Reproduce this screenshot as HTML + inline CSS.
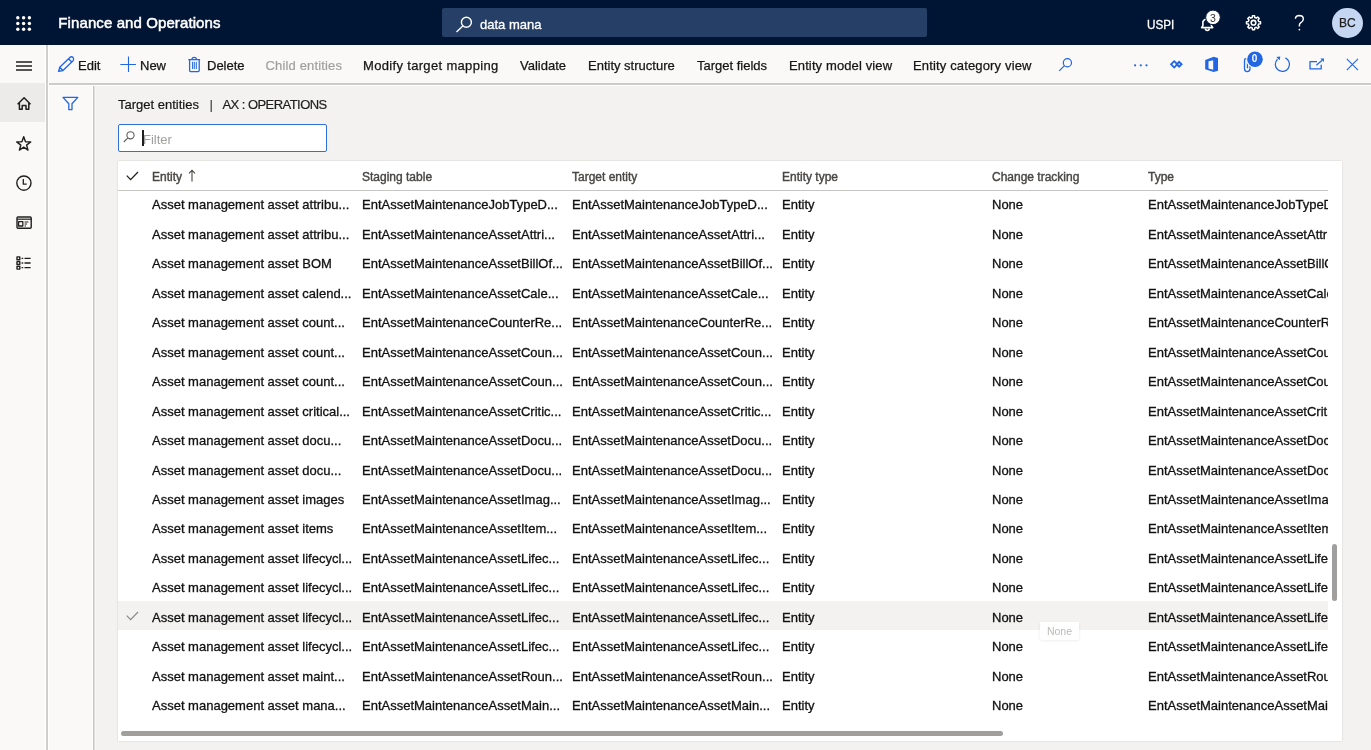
<!DOCTYPE html>
<html><head><meta charset="utf-8">
<style>
*{box-sizing:border-box;margin:0;padding:0}
html,body{width:1371px;height:750px;overflow:hidden;background:#f3f2f1;font-family:"Liberation Sans",sans-serif;color:#201f1e}
svg{position:absolute;overflow:visible}
.abs{position:absolute}
#root{position:absolute;left:0;top:0;width:1371px;height:750px;will-change:transform}
#hdr{position:absolute;left:0;top:0;width:1371px;height:45px;background:#001433}
#title{position:absolute;left:58.3px;top:14px;font-size:15px;letter-spacing:0.1px;color:#fff;-webkit-text-stroke:0.5px #fff;white-space:nowrap}
#search{position:absolute;left:442px;top:8px;width:485px;height:29px;background:#263f66;border-radius:2px}
#search .t{position:absolute;left:38px;top:8.5px;font-size:13px;color:#fff;-webkit-text-stroke:0.3px #fff;white-space:nowrap}
#uspi{position:absolute;left:1146.5px;top:16.5px;font-size:13px;transform:scaleX(0.9);transform-origin:0 0;color:#fff;-webkit-text-stroke:0.3px #fff}
#avatar{position:absolute;left:1332px;top:7.5px;width:30.5px;height:30.5px;border-radius:50%;background:#c4d6f1;color:#201f1e;-webkit-text-stroke:0.25px #201f1e;font-size:12px;text-align:center;line-height:30.5px}
#ap{position:absolute;left:49px;top:45px;width:1322px;height:41px;background:#faf9f8;border-bottom:1px solid #fff}
#apb{position:absolute;left:49px;top:83px;width:1324px;height:2px;background:#cdcbc9}
.ab{position:absolute;top:13.4px;font-size:13px;color:#161514;-webkit-text-stroke:0.25px #161514;white-space:nowrap}
.ab.dis{color:#a19f9d;-webkit-text-stroke:0.2px #a19f9d}
#nav{position:absolute;left:0;top:45px;width:49px;height:705px;background:#faf9f8;border-right:1px solid #fff}
.vl{position:absolute;width:1px}
#homehl{position:absolute;left:0;top:83px;width:45px;height:39px;background:#edebe9}
#fp{position:absolute;left:49px;top:86px;width:47px;height:664px;background:#faf9f8}
#crumb{position:absolute;left:118px;top:97px;font-size:13px;color:#161514;-webkit-text-stroke:0.2px #161514;white-space:nowrap}
#filter{position:absolute;left:118px;top:124px;width:209px;height:28px;background:#fff;border:1.5px solid #2f6fe0;border-radius:2px}
#filter .t{position:absolute;left:24px;top:6.5px;font-size:13px;color:#a19f9d}
#filter .caret{position:absolute;left:23px;top:5px;width:1.5px;height:16px;background:#201f1e}
#card{position:absolute;left:118px;top:161px;width:1224px;height:580px;background:#fff;box-shadow:0 0 1.5px rgba(0,0,0,.18)}
.hc{position:absolute;top:9.2px;font-size:12px;color:#484644;-webkit-text-stroke:0.4px #484644;white-space:nowrap}
#hline{position:absolute;left:0;top:29px;width:1210px;height:1px;background:#c8c6c4}
.row{position:absolute;left:0;width:1210px;height:29.46px}
.row.sel{background:#f3f2f1;height:28.2px}
.c{position:absolute;top:8.4px;font-size:13px;color:#111;-webkit-text-stroke:0.3px #111;white-space:nowrap;overflow:hidden}
.ty{width:180px}
.chk{left:8px;top:10px}
#vsb{position:absolute;left:1214px;top:383px;width:5px;height:57px;border-radius:3px;background:#a19f9d}
#hsb{position:absolute;left:3px;top:570px;width:882px;height:5px;border-radius:3px;background:#a19f9d}
#tip{position:absolute;left:1040px;top:622px;width:39px;height:18px;background:#fff;box-shadow:0 0.5px 3px rgba(0,0,0,.09);font-size:10.5px;color:#bdbab7;text-align:center;line-height:18px}
</style></head><body><div id="root">
<div id="hdr">
  <svg style="left:0;top:0" width="1" height="1" fill="#fff"><circle cx="17.8" cy="17.8" r="1.7"/><circle cx="23.6" cy="17.8" r="1.7"/><circle cx="29.4" cy="17.8" r="1.7"/><circle cx="17.8" cy="23.5" r="1.7"/><circle cx="23.6" cy="23.5" r="1.7"/><circle cx="29.4" cy="23.5" r="1.7"/><circle cx="17.8" cy="29.2" r="1.7"/><circle cx="23.6" cy="29.2" r="1.7"/><circle cx="29.4" cy="29.2" r="1.7"/></svg>
  <div id="title">Finance and Operations</div>
  <div id="search">
    <svg style="left:0;top:0" width="40" height="29" viewBox="442 8 40 29" fill="none" stroke="#fff" stroke-width="1.4"><circle cx="466.4" cy="22.3" r="5"/><path d="M462.8 26 L456.5 32"/></svg>
    <div class="t">data mana</div>
  </div>
  <div id="uspi">USPI</div>
  <!-- bell -->
  <svg style="left:0;top:0" width="1" height="1" viewBox="0 0 1 1">
    <g fill="none" stroke="#fff" stroke-width="1.6" stroke-linejoin="round">
      <path d="M1201.6 27.6 H1212.8 L1211.4 25.6 V21.6 A4.8 4.8 0 0 0 1202.9 21.6 V25.6 Z"/>
      <path d="M1205.4 28.6 A1.9 1.9 0 0 0 1209.2 28.6"/>
    </g>
    <circle cx="1213" cy="17.4" r="7.3" fill="#fff" stroke="#001433" stroke-width="1"/>
  </svg>
  <div class="abs" style="left:1209.9px;top:11.6px;font-size:10.5px;color:#323130">3</div>
  <!-- gear -->
  <svg style="left:0;top:0" width="1" height="1" viewBox="0 0 1 1">
    <g fill="none" stroke="#fff" stroke-width="1.5" stroke-linejoin="round">
      <path d="M1258.64 21.42 L1260.52 21.64 L1260.52 23.76 L1258.64 23.98 L1258.04 25.43 L1259.21 26.92 L1257.72 28.41 L1256.23 27.24 L1254.78 27.84 L1254.56 29.72 L1252.44 29.72 L1252.22 27.84 L1250.77 27.24 L1249.28 28.41 L1247.79 26.92 L1248.96 25.43 L1248.36 23.98 L1246.48 23.76 L1246.48 21.64 L1248.36 21.42 L1248.96 19.97 L1247.79 18.48 L1249.28 16.99 L1250.77 18.16 L1252.22 17.56 L1252.44 15.68 L1254.56 15.68 L1254.78 17.56 L1256.23 18.16 L1257.72 16.99 L1259.21 18.48 L1258.04 19.97 Z"/>
      <circle cx="1253.5" cy="22.7" r="2.3" stroke-width="1.6"/>
    </g>
  </svg>
  <svg style="left:0;top:0" width="1" height="1"><path d="M1295.4 18.8 Q1295.6 15.5 1299.3 15.5 Q1303.3 15.6 1303.3 18.9 Q1303.3 21.2 1300.9 22.6 Q1299.4 23.5 1299.4 25 V26.6" fill="none" stroke="#fff" stroke-width="1.45"/><circle cx="1299.4" cy="29.6" r="0.9" fill="#fff"/></svg>
  <div id="avatar">BC</div>
</div>
<div id="nav">
  <div id="homehl" style="top:38px"></div>
</div>
<div id="ap">
  <div class="ab" style="left:29px">Edit</div>
  <div class="ab" style="left:91px">New</div>
  <div class="ab" style="left:158px">Delete</div>
  <div class="ab dis" style="left:216.5px;letter-spacing:0.15px">Child entities</div>
  <div class="ab" style="left:314px;letter-spacing:0.33px">Modify target mapping</div>
  <div class="ab" style="left:471px">Validate</div>
  <div class="ab" style="left:539px">Entity structure</div>
  <div class="ab" style="left:648px">Target fields</div>
  <div class="ab" style="left:740px;letter-spacing:0.12px">Entity model view</div>
  <div class="ab" style="left:864px;letter-spacing:0.15px">Entity category view</div>
</div>
<div id="fp"></div><div id="apb"></div><div class="vl" style="left:45px;top:45px;height:705px;background:#fff"></div><div class="vl" style="left:46px;top:45px;height:705px;width:2px;background:#d0cecc"></div><div class="vl" style="left:92px;top:86px;height:664px;background:#fff"></div><div class="vl" style="left:93px;top:86px;height:664px;background:#c6c4c2"></div><div class="vl" style="left:94px;top:86px;height:664px;background:#e3e1df"></div><div class="vl" style="left:95px;top:86px;height:664px;background:#f7f6f5"></div>
<!-- icon layer in page coords -->
<svg style="left:0;top:0" width="1371" height="750" viewBox="0 0 1371 750">
  <g fill="none" stroke="#2266e3" stroke-width="1.3" stroke-linejoin="round">
    <!-- pencil -->
    <path d="M58.6 71.4 L59.7 67.3 L69.9 57.4 Q71.6 56.1 73.1 57.6 Q74.4 59.2 73.1 60.8 L62.9 70.5 Z M59.7 67.3 L62.9 70.5 M68.5 58.8 L71.8 62" stroke-width="1.35"/>
    <!-- plus -->
    <path d="M128.5 56.5 V72 M120.3 64.5 H136" stroke-width="1.1"/>
    <!-- trash -->
    <path d="M188.3 59.6 H200.1 M189.6 59.6 V70.6 Q189.6 71.6 190.6 71.6 H198.2 Q199.2 71.6 199.2 70.6 V59.6 M192 59.4 Q192 57.3 194.2 57.3 Q196.4 57.3 196.4 59.4"/>
    <path d="M192.6 61.8 V69 M194.3 61.8 V69 M196.3 61.8 V69" stroke-width="1"/>
    <!-- search action -->
    <circle cx="1067.4" cy="62.7" r="4.1" stroke-width="1.2"/>
    <path d="M1064.5 65.6 L1059.2 70.9" stroke-width="1.2"/>
    <!-- refresh -->
    <path d="M1285.4 57.9 A7.1 7.1 0 1 1 1277.5 59.2" stroke-width="1.25"/>
    <!-- popout -->
    <path d="M1317 61.6 H1310 V68.9 H1321.2 V64.8"/>
    <path d="M1316.3 65.3 L1322.2 60.2" stroke-width="1.2"/>
    <!-- close -->
    <path d="M1346.8 58.8 L1358 70.2 M1358 58.8 L1346.8 70.2" stroke-width="1.1"/>
    <!-- funnel -->
    <path d="M63 97.4 H77.8 L72 103.8 V109.6 H68.8 V103.8 Z"/>
  </g>
  <g fill="#2266e3">
    <circle cx="1135.1" cy="65.3" r="1.1"/><circle cx="1140.8" cy="65.3" r="1.1"/><circle cx="1146.5" cy="65.3" r="1.1"/>
    <!-- diamond icon -->
    <path d="M1174.2 59.9 L1178.6 64.3 L1174.2 68.7 L1169.8 64.3 Z M1174.2 62.4 L1172.3 64.3 L1174.2 66.2 L1176.1 64.3 Z" fill-rule="evenodd"/>
    <path d="M1179.1 60.6 L1182.9 64.3 L1179.1 68 L1175.4 64.3 Z M1179.1 63.3 L1178.1 64.3 L1179.1 65.3 L1180.1 64.3 Z" fill-rule="evenodd"/>
    <!-- office -->
    <path fill-rule="evenodd" d="M1205.2 59.9 L1213.7 56.8 L1218 58 V70.8 L1213.7 72 L1205.2 69.2 Z M1208.5 61.3 L1213.2 60.2 V69.8 L1208.5 68.6 Z"/>
    <path d="M1280.3 56.4 L1276.3 56.9 L1279.7 60.3 Z"/>
    <!-- popout arrow head -->
    <path d="M1324 58.4 L1323.9 62 L1320.3 58.5 Z"/>
  </g>
  <!-- paperclip -->
  <path d="M1250 58.5 V68.8 A2.75 2.75 0 0 1 1244.5 68.8 V60.2 A1.5 1.5 0 0 1 1247.5 60.2 V68.2" fill="none" stroke="#2266e3" stroke-width="1.3"/>
  <circle cx="1255" cy="59.2" r="8.9" fill="#faf9f8"/>
  <circle cx="1255" cy="59.2" r="7.8" fill="#2266e3"/>
  <g fill="none" stroke="#201f1e" stroke-width="1.3" stroke-linejoin="round">
    <!-- hamburger -->
    <path d="M16 62 H32 M16 66 H32 M16 70 H32" stroke-width="1.3"/>
    <!-- home -->
    <path d="M17.6 104.2 L24.1 97.8 L30.5 104.2 M19.4 102.6 V109.2 H22.2 V105.4 H26 V109.2 H28.8 V102.6" stroke-width="1.5"/>
    <!-- star -->
    <path d="M23.7 136.8 L25.5 141.7 L30.7 141.9 L26.6 145.1 L28 150.1 L23.7 147.2 L19.4 150.1 L20.8 145.1 L16.7 141.9 L21.9 141.7 Z" stroke-width="1.45"/>
    <!-- clock -->
    <circle cx="23.9" cy="183.1" r="7.1" stroke-width="1.4"/>
    <path d="M23.3 179 V184.2 H26.7" stroke-width="1.3"/>
    <!-- workspace -->
    <rect x="17" y="217" width="14.2" height="11.2" rx="1" stroke-width="1.4"/>
    <path d="M17 219.2 H31.2" stroke-width="1.2"/>
    <rect x="18.6" y="221.6" width="4.2" height="4.4" stroke-width="1.3"/>
    <path d="M24.6 222 H28.4 M24.6 224 H27 M24.6 226 H26" stroke-width="1"/>
    <!-- list -->
    <rect x="17" y="256.9" width="2.8" height="2.8" stroke-width="1.4"/>
    <rect x="17" y="261.6" width="2.8" height="2.8" stroke-width="1.4"/>
    <rect x="17" y="266.3" width="2.8" height="2.8" stroke-width="1.4"/>
    <path d="M21.6 258.3 H23.2 M24.5 258.3 H30.6 M21.6 263 H23.2 M24.5 263 H30.6 M21.6 267.7 H23.2 M24.5 267.7 H30.6" stroke-width="1.3"/>
  </g>
</svg>
<div class="abs" style="left:1251.8px;top:52.8px;font-size:10px;font-weight:bold;color:#fff">0</div>
<div id="crumb">Target entities</div><div class="abs" style="left:209.5px;top:97px;font-size:13px">|</div><div class="abs" style="left:222.5px;top:97px;-webkit-text-stroke:0.2px #161514;font-size:13px;letter-spacing:-0.55px;white-space:nowrap">AX : OPERATIONS</div>
<div id="filter">
  <svg style="left:3px;top:5px" width="14" height="14" viewBox="0 0 14 14" fill="none" stroke="#605e5c" stroke-width="1.1"><circle cx="8.5" cy="5.3" r="3.6"/><path d="M5.9 7.9 L1.8 12"/></svg>
  <div class="t">Filter</div><div class="caret"></div>
</div>
<div id="card">
  <svg style="left:8px;top:10px" width="13" height="10" viewBox="0 0 13 10"><path d="M0.8 4.6 L4.6 8.6 L12 1" fill="none" stroke="#201f1e" stroke-width="1.3"/></svg>
  <div class="hc" style="left:34px">Entity</div>
  <svg style="left:70px;top:8px" width="8" height="13" viewBox="0 0 8 13"><path d="M4 12.5 V1.2 M1 4.3 L4 1.2 L7 4.3" fill="none" stroke="#484644" stroke-width="1.1"/></svg>
  <div class="hc" style="left:244px">Staging table</div>
  <div class="hc" style="left:454px">Target entity</div>
  <div class="hc" style="left:664px">Entity type</div>
  <div class="hc" style="left:874px">Change tracking</div>
  <div class="hc" style="left:1030px">Type</div>
  <div id="hline"></div>
<div id="rows"><div class="row" style="top:28.00px"><div class="c" style="left:34px">Asset management asset attribu...</div><div class="c" style="left:244px">EntAssetMaintenanceJobTypeD...</div><div class="c" style="left:454px">EntAssetMaintenanceJobTypeD...</div><div class="c" style="left:664px">Entity</div><div class="c" style="left:874px">None</div><div class="c ty" style="left:1030px">EntAssetMaintenanceJobTypeDefault</div></div>
<div class="row" style="top:57.46px"><div class="c" style="left:34px">Asset management asset attribu...</div><div class="c" style="left:244px">EntAssetMaintenanceAssetAttri...</div><div class="c" style="left:454px">EntAssetMaintenanceAssetAttri...</div><div class="c" style="left:664px">Entity</div><div class="c" style="left:874px">None</div><div class="c ty" style="left:1030px">EntAssetMaintenanceAssetAttribute</div></div>
<div class="row" style="top:86.92px"><div class="c" style="left:34px">Asset management asset BOM</div><div class="c" style="left:244px">EntAssetMaintenanceAssetBillOf...</div><div class="c" style="left:454px">EntAssetMaintenanceAssetBillOf...</div><div class="c" style="left:664px">Entity</div><div class="c" style="left:874px">None</div><div class="c ty" style="left:1030px">EntAssetMaintenanceAssetBillOfMaterials</div></div>
<div class="row" style="top:116.38px"><div class="c" style="left:34px">Asset management asset calend...</div><div class="c" style="left:244px">EntAssetMaintenanceAssetCale...</div><div class="c" style="left:454px">EntAssetMaintenanceAssetCale...</div><div class="c" style="left:664px">Entity</div><div class="c" style="left:874px">None</div><div class="c ty" style="left:1030px">EntAssetMaintenanceAssetCalendar</div></div>
<div class="row" style="top:145.84px"><div class="c" style="left:34px">Asset management asset count...</div><div class="c" style="left:244px">EntAssetMaintenanceCounterRe...</div><div class="c" style="left:454px">EntAssetMaintenanceCounterRe...</div><div class="c" style="left:664px">Entity</div><div class="c" style="left:874px">None</div><div class="c ty" style="left:1030px">EntAssetMaintenanceCounterReading</div></div>
<div class="row" style="top:175.30px"><div class="c" style="left:34px">Asset management asset count...</div><div class="c" style="left:244px">EntAssetMaintenanceAssetCoun...</div><div class="c" style="left:454px">EntAssetMaintenanceAssetCoun...</div><div class="c" style="left:664px">Entity</div><div class="c" style="left:874px">None</div><div class="c ty" style="left:1030px">EntAssetMaintenanceAssetCounter</div></div>
<div class="row" style="top:204.76px"><div class="c" style="left:34px">Asset management asset count...</div><div class="c" style="left:244px">EntAssetMaintenanceAssetCoun...</div><div class="c" style="left:454px">EntAssetMaintenanceAssetCoun...</div><div class="c" style="left:664px">Entity</div><div class="c" style="left:874px">None</div><div class="c ty" style="left:1030px">EntAssetMaintenanceAssetCounter</div></div>
<div class="row" style="top:234.22px"><div class="c" style="left:34px">Asset management asset critical...</div><div class="c" style="left:244px">EntAssetMaintenanceAssetCritic...</div><div class="c" style="left:454px">EntAssetMaintenanceAssetCritic...</div><div class="c" style="left:664px">Entity</div><div class="c" style="left:874px">None</div><div class="c ty" style="left:1030px">EntAssetMaintenanceAssetCriticality</div></div>
<div class="row" style="top:263.68px"><div class="c" style="left:34px">Asset management asset docu...</div><div class="c" style="left:244px">EntAssetMaintenanceAssetDocu...</div><div class="c" style="left:454px">EntAssetMaintenanceAssetDocu...</div><div class="c" style="left:664px">Entity</div><div class="c" style="left:874px">None</div><div class="c ty" style="left:1030px">EntAssetMaintenanceAssetDocument</div></div>
<div class="row" style="top:293.14px"><div class="c" style="left:34px">Asset management asset docu...</div><div class="c" style="left:244px">EntAssetMaintenanceAssetDocu...</div><div class="c" style="left:454px">EntAssetMaintenanceAssetDocu...</div><div class="c" style="left:664px">Entity</div><div class="c" style="left:874px">None</div><div class="c ty" style="left:1030px">EntAssetMaintenanceAssetDocument</div></div>
<div class="row" style="top:322.60px"><div class="c" style="left:34px">Asset management asset images</div><div class="c" style="left:244px">EntAssetMaintenanceAssetImag...</div><div class="c" style="left:454px">EntAssetMaintenanceAssetImag...</div><div class="c" style="left:664px">Entity</div><div class="c" style="left:874px">None</div><div class="c ty" style="left:1030px">EntAssetMaintenanceAssetImage</div></div>
<div class="row" style="top:352.06px"><div class="c" style="left:34px">Asset management asset items</div><div class="c" style="left:244px">EntAssetMaintenanceAssetItem...</div><div class="c" style="left:454px">EntAssetMaintenanceAssetItem...</div><div class="c" style="left:664px">Entity</div><div class="c" style="left:874px">None</div><div class="c ty" style="left:1030px">EntAssetMaintenanceAssetItem</div></div>
<div class="row" style="top:381.52px"><div class="c" style="left:34px">Asset management asset lifecycl...</div><div class="c" style="left:244px">EntAssetMaintenanceAssetLifec...</div><div class="c" style="left:454px">EntAssetMaintenanceAssetLifec...</div><div class="c" style="left:664px">Entity</div><div class="c" style="left:874px">None</div><div class="c ty" style="left:1030px">EntAssetMaintenanceAssetLifecycle</div></div>
<div class="row" style="top:410.98px"><div class="c" style="left:34px">Asset management asset lifecycl...</div><div class="c" style="left:244px">EntAssetMaintenanceAssetLifec...</div><div class="c" style="left:454px">EntAssetMaintenanceAssetLifec...</div><div class="c" style="left:664px">Entity</div><div class="c" style="left:874px">None</div><div class="c ty" style="left:1030px">EntAssetMaintenanceAssetLifecycle</div></div>
<div class="row sel" style="top:440.44px"><svg class="chk" width="13" height="10" viewBox="0 0 13 10"><path d="M0.8 4.6 L4.6 8.6 L12 1" fill="none" stroke="#8a8886" stroke-width="1.2"/></svg><div class="c" style="left:34px">Asset management asset lifecycl...</div><div class="c" style="left:244px">EntAssetMaintenanceAssetLifec...</div><div class="c" style="left:454px">EntAssetMaintenanceAssetLifec...</div><div class="c" style="left:664px">Entity</div><div class="c" style="left:874px">None</div><div class="c ty" style="left:1030px">EntAssetMaintenanceAssetLifecycle</div></div>
<div class="row" style="top:469.90px"><div class="c" style="left:34px">Asset management asset lifecycl...</div><div class="c" style="left:244px">EntAssetMaintenanceAssetLifec...</div><div class="c" style="left:454px">EntAssetMaintenanceAssetLifec...</div><div class="c" style="left:664px">Entity</div><div class="c" style="left:874px">None</div><div class="c ty" style="left:1030px">EntAssetMaintenanceAssetLifecycle</div></div>
<div class="row" style="top:499.36px"><div class="c" style="left:34px">Asset management asset maint...</div><div class="c" style="left:244px">EntAssetMaintenanceAssetRoun...</div><div class="c" style="left:454px">EntAssetMaintenanceAssetRoun...</div><div class="c" style="left:664px">Entity</div><div class="c" style="left:874px">None</div><div class="c ty" style="left:1030px">EntAssetMaintenanceAssetRound</div></div>
<div class="row" style="top:528.82px"><div class="c" style="left:34px">Asset management asset mana...</div><div class="c" style="left:244px">EntAssetMaintenanceAssetMain...</div><div class="c" style="left:454px">EntAssetMaintenanceAssetMain...</div><div class="c" style="left:664px">Entity</div><div class="c" style="left:874px">None</div><div class="c ty" style="left:1030px">EntAssetMaintenanceAssetMaintenance</div></div></div>
  <div id="vsb"></div>
  <div id="hsb"></div>
</div>
<div id="tip">None</div>
</div></body></html>
